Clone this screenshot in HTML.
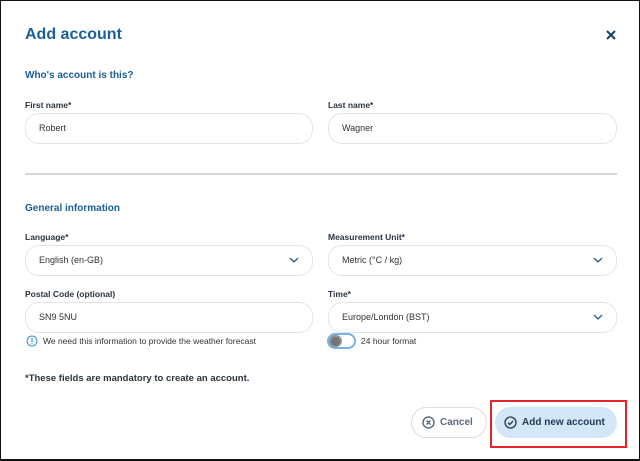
<!DOCTYPE html><html><head><style>
*{box-sizing:border-box;margin:0;padding:0}
body{width:640px;height:461px;background:#fff;font-family:"Liberation Sans",sans-serif;position:relative;overflow:hidden;border:1px solid #111;border-bottom:2px solid #111}
.a{position:absolute}
.t{left:24px;top:25px;font-size:16px;font-weight:bold;color:#1b5f97}
.s{font-size:10px;font-weight:bold;color:#1b5f97}
.l{font-size:8.5px;font-weight:bold;color:#2a3440}
.i{height:31px;border:1px solid #dfe6ee;border-radius:14px;font-size:9px;color:#333;padding-left:13px;line-height:29px}
.r{left:327px;width:289px}.f{left:24px;width:288px}
.ch{position:absolute;right:13px;top:10px}
</style></head><body>
<div class="a t">Add account</div>
<svg class="a" style="left:605px;top:29px" width="10" height="10"><path d="M1 1L9 9M9 1L1 9" stroke="#1b3f66" stroke-width="2"/></svg>
<div class="a s" style="left:24px;top:69px">Who's account is this?</div>
<div class="a l" style="left:24px;top:99px">First name*</div>
<div class="a l" style="left:327px;top:99px">Last name*</div>
<div class="a i f" style="top:112px">Robert</div>
<div class="a i r" style="top:112px">Wagner</div>
<div class="a" style="left:24px;top:172px;width:592px;height:2px;background:#d4d8dc"></div>
<div class="a s" style="left:24px;top:202px">General information</div>
<div class="a l" style="left:24px;top:231px">Language*</div>
<div class="a l" style="left:327px;top:231px">Measurement Unit*</div>
<div class="a i f" style="top:244px">English (en-GB)<svg class="ch" width="10" height="8"><path d="M1 2L5 6L9 2" stroke="#1b5f97" fill="none" stroke-width="1.3"/></svg></div>
<div class="a i r" style="top:244px">Metric (°C / kg)<svg class="ch" width="10" height="8"><path d="M1 2L5 6L9 2" stroke="#1b5f97" fill="none" stroke-width="1.3"/></svg></div>
<div class="a l" style="left:24px;top:288px">Postal Code (optional)</div>
<div class="a l" style="left:327px;top:288px">Time*</div>
<div class="a i f" style="top:301px">SN9 5NU</div>
<div class="a i r" style="top:301px">Europe/London (BST)<svg class="ch" width="10" height="8"><path d="M1 2L5 6L9 2" stroke="#1b5f97" fill="none" stroke-width="1.3"/></svg></div>
<svg class="a" style="left:25px;top:334px" width="12" height="12"><circle cx="6" cy="6" r="5" fill="none" stroke="#3a8fd0"/><path d="M6 3v4M6 8.3v1" stroke="#3a8fd0" stroke-width="1.2"/></svg>
<div class="a" style="left:42px;top:335px;font-size:8.5px;color:#333">We need this information to provide the weather forecast</div>
<div class="a" style="left:326px;top:332px;width:29px;height:16px;border-radius:8px;border:2px solid #7bb0e0;background:#fff"><div style="position:absolute;left:2px;top:2px;width:9px;height:9px;border-radius:50%;background:#666"></div><div style="position:absolute;left:0;top:0;width:13px;height:12px;border-radius:6px;background:#777;opacity:.8"></div></div>
<div class="a" style="left:360px;top:335px;font-size:8.5px;color:#333">24 hour format</div>
<div class="a" style="left:24px;top:372px;font-size:9.5px;font-weight:bold;color:#2a3440">*These fields are mandatory to create an account.</div>
<div class="a" style="left:410px;top:406px;width:76px;height:31px;border:1px solid #d7dee6;border-radius:16px;font-size:10px;font-weight:bold;color:#5a6b7c;line-height:29px;padding-left:28px">Cancel
<svg style="position:absolute;left:10px;top:8px" width="13" height="13"><circle cx="6.5" cy="6.5" r="5.5" fill="none" stroke="#5a6b7c" stroke-width="1.4"/><path d="M4.5 4.5l4 4M8.5 4.5l-4 4" stroke="#5a6b7c" stroke-width="1.4"/></svg></div>
<div class="a" style="left:489px;top:399px;width:137px;height:48px;border:2px solid #e0252c"></div>
<div class="a" style="left:494px;top:406px;width:122px;height:31px;background:#d3e7f8;border-radius:16px;font-size:10px;font-weight:bold;color:#1f3a55;line-height:31px;padding-left:27px">Add new account
<svg style="position:absolute;left:9px;top:9px" width="13" height="13"><circle cx="6.5" cy="6.5" r="5.5" fill="none" stroke="#1f3a55" stroke-width="1.3"/><path d="M4 6.7l1.8 1.8L9 5" stroke="#1f3a55" stroke-width="1.3" fill="none"/></svg></div>
</body></html>
